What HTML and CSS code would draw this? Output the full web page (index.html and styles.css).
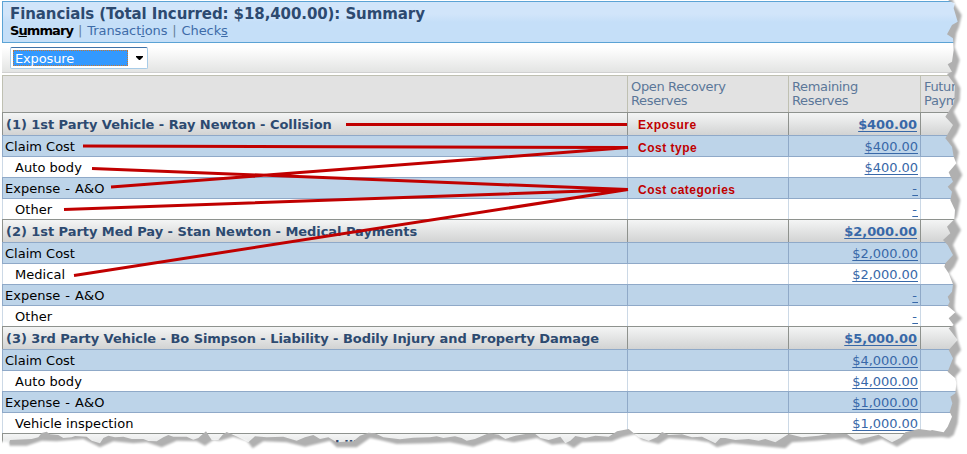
FILE: index.html
```html
<!DOCTYPE html>
<html lang="en">
<head>
<meta charset="utf-8">
<title>Financials</title>
<link rel="stylesheet" href="styles.css">
</head>
<body>
<main class="page">
  <header class="title-bar">
    <h1>Financials (Total Incurred: $18,400.00): Summary</h1>
    <nav><b>S<u>u</u>mmary</b><i>|</i><a class="t">Transact<u>i</u>ons</a><i>|</i><a>Check<u>s</u></a></nav>
  </header>
  <div class="toolbar"><div class="select"><span>Exposure</span><svg width="9" height="5" viewBox="0 0 9 5"><path d="M1 0h7v1L5 4H4L1 1z"/></svg></div></div>
  <section class="table">
    <div class="row head"><div></div><div>Open Recovery<br>Reserves</div><div>Remaining<br>Reserves</div><div>Future<br>Paym</div></div>
    <div class="row group"><div>(1) 1st Party Vehicle - Ray Newton - Collision</div><div class="note">Exposure</div><div><a>$400.00</a></div><div></div></div>
    <div class="row type"><div>Claim Cost</div><div class="note">Cost type</div><div><a>$400.00</a></div><div></div></div>
    <div class="row cat"><div>Auto body</div><div></div><div><a>$400.00</a></div><div></div></div>
    <div class="row type"><div class="expense">Expense - A&amp;O</div><div class="note">Cost categories</div><div><a class="dash">-</a></div><div></div></div>
    <div class="row cat"><div>Other</div><div></div><div><a class="dash">-</a></div><div></div></div>
    <div class="row group"><div>(2) 1st Party Med Pay - Stan Newton - Medical Payments</div><div></div><div><a>$2,000.00</a></div><div></div></div>
    <div class="row type"><div>Claim Cost</div><div></div><div><a>$2,000.00</a></div><div></div></div>
    <div class="row cat"><div>Medical</div><div></div><div><a>$2,000.00</a></div><div></div></div>
    <div class="row type"><div class="expense">Expense - A&amp;O</div><div></div><div><a class="dash">-</a></div><div></div></div>
    <div class="row cat"><div>Other</div><div></div><div><a class="dash">-</a></div><div></div></div>
    <div class="row group"><div>(3) 3rd Party Vehicle - Bo Simpson - Liability - Bodily Injury and Property Damage</div><div></div><div><a>$5,000.00</a></div><div></div></div>
    <div class="row type"><div>Claim Cost</div><div></div><div><a>$4,000.00</a></div><div></div></div>
    <div class="row cat"><div>Auto body</div><div></div><div><a>$4,000.00</a></div><div></div></div>
    <div class="row type"><div class="expense">Expense - A&amp;O</div><div></div><div><a>$1,000.00</a></div><div></div></div>
    <div class="row cat"><div>Vehicle inspection</div><div></div><div><a>$1,000.00</a></div><div></div></div>
    <div class="row group last"><div>bility</div><div></div><div></div><div></div></div>
  </section>
</main>
<svg class="overlay" width="967" height="454" viewBox="0 0 967 454">
  <g stroke="#c00000" stroke-width="3">
    <path d="M346 124.5H627M83 146L628 147.500M92 168.500L628 189.500M111 187L628 147.500M64 209.500L628 189.500M74 275.500L628 189.500"/>
  </g>
  <g fill="#b0b0b0">
    <path transform="translate(927 0) scale(.33333)" d="M65 0L65 3L84 10L80 25L92 65L75 75L60 103L78 115L80 150L75 185L62 193L75 215L60 222L84 255L82 300L78 315L55 350L78 375L55 415L75 440L80 470L88 490L65 517L78 545L62 560L75 575L70 600L84 630L82 658L60 680L70 700L48 720L62 735L78 765L55 790L52 800L65 820L78 853L75 875L62 890L68 905L62 918L85 937L65 955L80 975L65 985L92 1020L65 1050L78 1075L62 1115L85 1135L88 1150L85 1180L70 1190L76 1210L68 1235L75 1250L62 1280L50 1297L15 1290L0 1299L0 1362H130V0z"/>
    <path transform="translate(0 424) scale(.33333)" d="M28 55L30 48L95 45L115 40L125 27L140 23L150 31L175 33L190 42L215 40L225 36L260 38L275 50L300 58L310 42L325 35L345 40L370 38L395 45L430 45L445 51L470 52L490 40L505 33L520 38L560 38L580 47L595 42L618 22L635 48L655 48L668 32L680 24L712 38L745 55L765 37L800 40L850 38L870 44L890 50L915 40L940 33L960 45L985 40L1010 55L1060 52L1080 35L1105 26L1125 28L1150 40L1200 46L1240 41L1290 40L1310 37L1330 42L1365 37L1385 42L1400 50L1425 45L1446 36V100H28z"/>
    <path transform="translate(482 424) scale(.33333)" d="M0 36L20 28L50 32L70 45L100 35L130 30L160 30L175 42L200 48L235 38L250 58L265 50L280 36L310 42L340 35L380 38L405 22L440 15L470 40L500 50L525 40L540 24L560 33L600 31L630 40L660 38L700 58L715 42L730 42L760 48L800 45L830 50L850 45L880 55L920 30L960 40L1010 35L1050 28L1095 30L1120 48L1160 40L1190 32L1230 55L1255 42L1270 25L1310 15L1350 20L1380 28V100H0z"/>
  </g>
  <g class="paper" fill="#fff">
    <path transform="translate(927 0) scale(.33333)" d="M65 -30L84 15L104 45L96 80L88 100L82 140L98 180L88 215L82 230L100 265L98 300L80 335L100 375L90 400L76 420L96 455L92 475L88 490L106 525L92 550L84 565L100 600L90 650L84 660L102 690L88 715L78 735L94 775L82 800L66 820L88 855L84 890L82 920L85 935L106 955L84 975L92 1020L102 1050L86 1070L84 1090L102 1110L85 1130L88 1160L98 1200L92 1270L80 1305L60 1318V1400H200V-30z"/>
    <path d="M-10 441.700H8L9.300 445.700L26.700 445.700L41.700 440.700L56.700 441.300L83.300 439L100 447.300L113.300 441.300L133.300 443.300L146.700 442.300L161.700 447.300L176.700 440.700L196.700 441.300L205 445.700L213.300 440L220 440.700L233.300 436.700L246.700 440.700L252.700 448.300L263.300 441.300L286.700 442.300L305 446.700L330 440.700L336.700 447.300L356.700 447.300L370 438L380 440L396.700 444L430 443.300L450 442.300L473.300 446.700L482 443.700L495.300 439L513.700 442.300L537 438L552 444.700L565.300 443.300L573.700 448L582 442.300L612 441.300L622 437.300L635.300 434L642 440L658.700 444L668.700 438L695.300 440L708.700 442.300L717 447.300L732 443.300L768.700 446.700L785.300 448.300L792 442.300L815.300 440.700L845.300 438L862 444.700L882 439L897 446.700L912 438L942 437L950 438V480H-10z"/>
  </g>
</svg>
</body>
</html>
```
FILE: styles.css
```css
* { box-sizing: border-box; }
body { margin: 0; background: #fff; font: 13px/14px "DejaVu Sans", sans-serif; overflow: hidden; }
.page { width: 967px; height: 454px; padding: 1px 0 0 2px; overflow: hidden; }
.title-bar { height: 42px; border: 1px solid #5ba3d5; border-right: 0; background: linear-gradient(#d1e5fa 0 30%, #c5dff8 50%); padding: 4px 0 0 7px; color: #2d4a70; }
h1 { margin: 0; font-size: 15px; line-height: 16px; white-space: nowrap; letter-spacing: -0.09px; }
nav { line-height: 16px; color: #3e6ca8; margin-top: 1px; letter-spacing: -0.1px; }
nav b { color: #000; letter-spacing: -0.9px; }
nav i { font-style: normal; color: #67809c; margin: 0 5px; }
.toolbar { height: 30px; border-bottom: 1px solid #d0d0d0; background: linear-gradient(#fff 15%, #e3e4e3); padding: 4px 0 0 8px; }
.select { width: 138px; height: 22px; border: 1px solid #a8cce8; border-top-color: #3f72a8; border-radius: 2px; background: #fff; padding: 2px; display: flex; align-items: center; }
.select span { width: 115px; height: 16px; background: #3399ff; color: #fff; border: 1px dotted #c87830; padding-left: 1px; line-height: 15px; letter-spacing: -0.15px; }
.select svg { margin-left: 7px; }
.table { margin-top: 2px; border-left: 1px solid #d6dce8; }
.row { display: grid; grid-template-columns: 625px 161px 132px 1fr; height: 21px; border-top: 1px solid #8fa9c8; line-height: 22px; white-space: nowrap; margin-left: -1px; }
.row > div { border-left: 1px solid #ccd9e6; padding: 0 2px; height: 100%; min-height: 0; }
.row > div:nth-child(3) { text-align: right; }
.row a { color: #3868a8; text-decoration: underline; text-underline-offset: 2px; letter-spacing: -0.05px; }
.row .dash { letter-spacing: 1px; }
.row.head { height: 37px; border-color: #bfc0b2; background: #e2e2e2; color: #5b7799; line-height: 14px; letter-spacing: -0.35px; }
.row.head > div { border-color: #bfc0b2; text-align: left; padding: 4px 3px; }
.row.group { height: 23px; border-color: #8e928e; background: linear-gradient(#f4f5f5, #d2d3d3); font-weight: bold; color: #2d4a70; line-height: 23px; letter-spacing: -0.05px; }
.row.group > div { border-color: #8e928e; padding: 0 3px; }
.row.type { background: #bdd4e9; }
.row.type > div { border-color: #8fa9c8; }
.row.cat > div:first-child { padding-left: 12px; letter-spacing: 0.05px; }
.row .expense { word-spacing: 1px; }
.row > .note.note { color: #c00000; font: bold 12px/24px "Liberation Sans", sans-serif; padding-left: 10px; letter-spacing: 0.5px; }
.row.last > div:first-child { padding-left: 332px; }
.overlay { position: absolute; left: 0; top: 0; }
.paper { filter: blur(1px); }
```
